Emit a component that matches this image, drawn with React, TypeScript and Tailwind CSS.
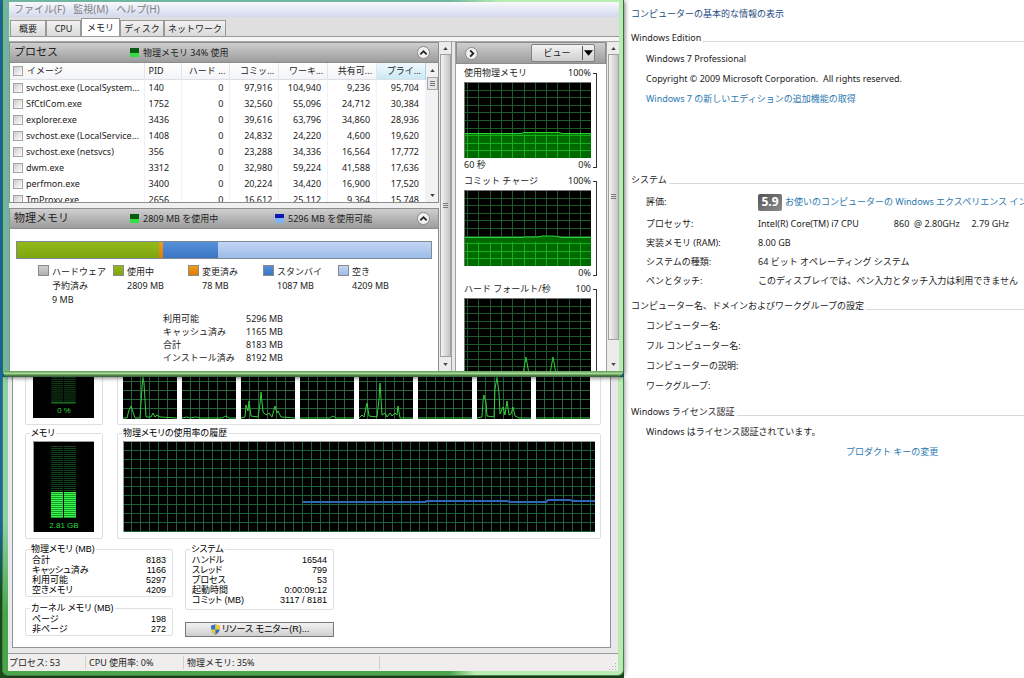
import type { ReactNode } from "react";

const processes = [
  ["svchost.exe (LocalSystem...", "140", "0", "97,916", "104,940", "9,236", "95,704"],
  ["SfCtlCom.exe", "1752", "0", "32,560", "55,096", "24,712", "30,384"],
  ["explorer.exe", "3436", "0", "39,616", "63,796", "34,860", "28,936"],
  ["svchost.exe (LocalService...", "1408", "0", "24,832", "24,220", "4,600", "19,620"],
  ["svchost.exe (netsvcs)", "356", "0", "23,288", "34,336", "16,564", "17,772"],
  ["dwm.exe", "3312", "0", "32,980", "59,224", "41,588", "17,636"],
  ["perfmon.exe", "3400", "0", "20,224", "34,420", "16,900", "17,520"],
  ["TmProxy.exe", "2656", "0", "16,612", "25,112", "9,364", "15,748"],
];

const numberColumns = ["ハード ...", "コミッ...", "ワーキ...", "共有可...", "プライ..."];

const tabs = [
  { name: "概要", width: "w-9" },
  { name: "CPU", width: "w-[35px]" },
  { name: "メモリ", width: "w-[39px]" },
  { name: "ディスク", width: "w-[44px]" },
  { name: "ネットワーク", width: "w-[62px]" },
];

const memoryParts = [
  { label: "ハードウェア", more: "予約済み", mb: 9, color: "from-[#d0d0d0] to-[#b0b0b0]" },
  { label: "使用中", mb: 2809, color: "from-[#93b81a] to-[#7ea60c]" },
  { label: "変更済み", mb: 78, color: "from-[#f39a1c] to-[#dc7c04]" },
  { label: "スタンバイ", mb: 1087, color: "from-[#5590da] to-[#3b75c4]" },
  { label: "空き", mb: 4209, color: "from-[#c2d6f5] to-[#9dbce8]" },
];

const cpuLines = [
  "0,41 4,41 6,33 8,29 10,35 12,41 17,41 19,10 20,0 21,6 23,40 28,40 30,36 32,40 34,38 37,40 54,41",
  "0,41 5,40 8,41 14,40 18,41 40,41 44,39 47,41 54,41",
  "0,41 4,40 5,28 7,34 8,24 10,39 17,40 19,27 20,15 22,35 25,38 28,36 31,40 34,29 36,36 37,34 40,40 54,41",
  "0,41 30,41 33,39 36,41 54,41",
  "0,41 3,38 5,40 8,26 10,39 18,40 20,22 21,6 23,38 26,36 28,40 31,36 33,39 36,36 38,38 39,29 41,41 54,41",
  "0,41 54,41",
  "0,41 5,40 6,24 7,18 9,25 10,39 17,40 18,12 20,0 22,16 23,37 26,30 28,38 30,24 32,38 34,37 36,30 38,39 42,41 54,41",
  "0,41 54,41",
];

function PanelHeader({ title, children }: { title: string; children?: ReactNode }) {
  return (
    <div className="flex h-[21px] shrink-0 items-center border border-[#8d8d8d] bg-linear-to-b from-[#cfcfcf] to-[#9c9c9c] px-1">
      <h2 className="w-[116px] text-[11px]">{title}</h2>
      {children}
      <button type="button" aria-label={`${title} を折りたたむ`} className="mr-1 ml-auto flex size-[13px] items-center justify-center rounded-full border border-[#8a8a8a] bg-[#f1f1f1]">
        <svg viewBox="0 0 10 10" className="size-[9px]" fill="none" stroke="#222" strokeWidth="2">
          <path d="M1.5 7 5 3.5 8.5 7" />
        </svg>
      </button>
    </div>
  );
}

function Indicator({ blue, children }: { blue?: boolean; children: ReactNode }) {
  return (
    <div className="flex items-center gap-1">
      <span className={`size-[9px] bg-linear-to-b ${blue ? "from-[#0a18b0] from-40% to-[#7cb4f4] to-40%" : "from-[#0a5a10] from-60% to-[#30e040] to-60%"}`} />
      {children}
    </div>
  );
}

function Arrow({ down }: { down?: boolean }) {
  return (
    <svg viewBox="0 0 6 4" className="h-[3px] w-[5px]" fill="#444">
      <path d={down ? "M0 0h6L3 4z" : "M0 4h6L3 0z"} />
    </svg>
  );
}

function ScrollBar({ thumb }: { thumb: string }) {
  return (
    <div className="flex w-3 shrink-0 flex-col items-center bg-[#ececec]">
      <button type="button" aria-label="上へスクロール" className="flex h-3 w-full items-center justify-center"><Arrow /></button>
      <div className={`${thumb} flex w-[11px] items-center justify-center border border-[#a0a0a0] bg-linear-to-r from-[#f4f4f4] to-[#c4c4c4]`}>
        <Grip />
      </div>
      <button type="button" aria-label="下へスクロール" className="mt-auto flex h-[13px] w-full items-center justify-center"><Arrow down /></button>
    </div>
  );
}

function Grip() {
  return (
    <svg viewBox="0 0 5 6" className="h-[6px] w-[5px]" stroke="#777">
      <path d="M0 .5h5M0 2.5h5M0 4.5h5" />
    </svg>
  );
}

function ProcessList() {
  return (
    <div className="flex h-[140px] shrink-0 border-x border-b border-[#8d8d8d] bg-white">
      <div className="min-w-0 flex-1 overflow-hidden">
        <table className="w-full table-fixed border-collapse leading-4 whitespace-nowrap">
          <colgroup>
            <col className="w-[134px]" />
            <col className="w-[37px]" />
            <col /><col /><col /><col /><col />
          </colgroup>
          <thead>
            <tr className="h-4 border-b border-[#dcdfe4] bg-linear-to-b from-white to-[#f3f4f6]">
              <th className="border-r border-[#e2e6ec] p-0 text-left font-normal">
                <label className="flex items-center gap-1 pl-[3px]">
                  <CheckBox />
                  イメージ
                </label>
              </th>
              <th className="border-r border-[#e2e6ec] p-0 pl-1 text-left font-normal">PID</th>
              {numberColumns.map((name, i) => (
                <th key={name} className={`border-r p-0 pr-1 text-right font-normal ${i === 4 ? "border-[#a8d4e8] bg-linear-to-b from-[#eff9fd] to-[#cbe9f6]" : "border-[#e2e6ec]"}`}>
                  {name}
                </th>
              ))}
            </tr>
          </thead>
          <tbody>
            {processes.map(([name, pid, ...numbers]) => (
              <tr key={pid} className="h-4">
                <td className="border-r border-[#f0f2f5] p-0">
                  <label className="flex items-center gap-[3px] pl-[3px]">
                    <CheckBox />
                    {name}
                  </label>
                </td>
                <td className="border-r border-[#f0f2f5] p-0 pl-1">{pid}</td>
                {numbers.map((n, i) => (
                  <td key={i} className="border-r border-[#f0f2f5] p-0 pr-[6px] text-right">{n}</td>
                ))}
              </tr>
            ))}
          </tbody>
        </table>
      </div>
      <div className="flex w-3 flex-col items-center bg-[#f2f2f2]">
        <button type="button" aria-label="上へ" className="flex h-[14px] items-center"><Arrow /></button>
        <div className="flex h-[13px] w-[11px] items-center justify-center border border-[#a8a8a8] bg-[#e4e4e4]"><Grip /></div>
        <button type="button" aria-label="下へ" className="mt-auto flex h-[13px] items-center"><Arrow down /></button>
      </div>
    </div>
  );
}

function CheckBox() {
  return <input type="checkbox" className="size-[10px] shrink-0 appearance-none border border-[#a2a3a3] bg-linear-to-br from-[#cdcdcd] to-white" />;
}

function PhysicalMemory() {
  return (
    <div className="min-h-0 flex-1 border-x border-[#8d8d8d] bg-white pt-3">
      <div className="mx-[6px] flex h-[18px] border border-[#7d8a94]">
        {memoryParts.map((part) => (
          <div key={part.label} className={`basis-0 bg-linear-to-b ${part.color}`} style={{ flexGrow: part.mb }} />
        ))}
      </div>
      <ul className="mt-[6px] ml-7 flex leading-[14px]">
        {memoryParts.map((part) => (
          <li key={part.label} className="flex w-[75px] shrink-0 gap-[3px]">
            <span className={`size-[11px] shrink-0 border border-[#8a8a8a] bg-linear-to-b ${part.color}`} />
            <span className="whitespace-nowrap">
              {part.label}
              {part.more && <span className="block">{part.more}</span>}
              <span className="block">{part.mb} MB</span>
            </span>
          </li>
        ))}
      </ul>
      <dl className="mt-[5px] ml-[153px] grid grid-cols-[83px_auto] justify-start leading-[13px]">
        <dt>利用可能</dt><dd>5296 MB</dd>
        <dt>キャッシュ済み</dt><dd>1165 MB</dd>
        <dt>合計</dt><dd>8183 MB</dd>
        <dt>インストール済み</dt><dd>8192 MB</dd>
      </dl>
    </div>
  );
}

function ResourceGraph({ title, max, min, start, line, fill }: { title: string; max: string; min?: string; start?: string; line: string; fill?: boolean }) {
  const columns = Array.from({ length: 11 }, (_, i) => Math.round(i * 11.3) + 3.5);
  return (
    <div className="flex gap-[2px] pl-2">
      <div className="w-[127px]">
        <div className="flex h-[18px] items-center justify-between"><span>{title}</span><span>{max}</span></div>
        <svg viewBox="0 0 127 76" className="block h-[76px] w-full bg-black" fill="none">
          <g stroke="#1d5a2a">
            {columns.map((x) => <path key={x} d={`M${x} 0V76`} />)}
            {Array.from({ length: 10 }, (_, i) => <path key={i} d={`M0 ${Math.round(i * 7.6) + 0.5}H127`} />)}
          </g>
          {fill && (
            <>
              <path d={`${line}V76H0z`} fill="#006a00" />
              <g stroke="#14b01c">
                {columns.map((x) => <path key={x} d={`M${x} 52V76`} />)}
                <path d="M0 53.5H127M0 61.5H127M0 68.5H127" />
              </g>
            </>
          )}
          <path d={line} stroke="#2bd335" />
          <path d="M.5 76V.5H127" stroke="#777" />
        </svg>
        {min && <div className="flex h-[14px] items-center justify-between"><span>{start}</span><span>{min}</span></div>}
      </div>
      <div className={`mt-[9px] w-1 border-t border-r border-[#333] ${min ? "mb-1 border-b" : ""}`} />
    </div>
  );
}

function ResourceMonitor() {
  return (
    <section className="relative z-10 ml-[2px] flex h-[377px] flex-col overflow-hidden rounded-b-md border border-t-0 border-[#3f6a48] bg-linear-to-r from-[#6fb5a0] from-72% to-[#b8ecb0] to-80% pt-[2px] shadow-[1px_1px_4px_#0008]">
      <div className="mr-[4px] ml-[6px] flex min-h-0 flex-1 flex-col bg-[#f0f0f0]">
        <nav className="flex h-[15px] items-center gap-2 bg-linear-to-b from-[#f8f9fc] to-[#d3d9ee] pl-[5px] text-[10px] text-[#808080]">
          <button type="button">ファイル(F)</button>
          <button type="button">監視(M)</button>
          <button type="button">ヘルプ(H)</button>
        </nav>
        <div role="tablist" className="flex h-5 items-end border-b border-[#999] bg-[#dfdfdf] pl-px">
          {tabs.map(({ name, width }) => (
            <button
              key={name}
              type="button"
              role="tab"
              aria-selected={name === "メモリ"}
              className={`${width} border border-b-0 border-[#999] text-center whitespace-nowrap ${name === "メモリ" ? "h-[18px] bg-white" : "h-4 bg-linear-to-b from-[#f2f2f2] to-[#dadada]"}`}
            >
              {name}
            </button>
          ))}
        </div>
        <div className="h-[5px] border-b border-[#aaa] bg-[#f6f6f6]" />
        <div className="flex min-h-0 flex-1">
          <div className="flex min-w-0 flex-1 flex-col">
            <PanelHeader title="プロセス">
              <Indicator>物理メモリ 34% 使用</Indicator>
            </PanelHeader>
            <ProcessList />
            <div className="h-[5px] shrink-0" />
            <PanelHeader title="物理メモリ">
              <div className="w-[145px]"><Indicator>2809 MB を使用中</Indicator></div>
              <Indicator blue>5296 MB を使用可能</Indicator>
            </PanelHeader>
            <PhysicalMemory />
          </div>
          <ScrollBar thumb="h-[303px]" />
          <div className="w-[5px] shrink-0 border-x border-[#a0a0a0] bg-[#e8e8e8]" />
          <div className="w-[151px] shrink-0 overflow-hidden border-r border-[#a0a0a0] bg-white">
            <div className="flex h-[22px] items-center justify-between border border-[#8d8d8d] bg-linear-to-b from-[#cfcfcf] to-[#9c9c9c] pr-[10px] pl-2">
              <button type="button" aria-label="グラフを隠す" className="flex size-[13px] items-center justify-center rounded-full border border-[#8a8a8a] bg-[#f1f1f1]">
                <svg viewBox="0 0 10 10" className="size-[9px]" fill="none" stroke="#222" strokeWidth="2"><path d="M3.5 1.5 7 5 3.5 8.5" /></svg>
              </button>
              <button type="button" className="flex h-[18px] w-16 items-center rounded-xs border border-[#808080] bg-linear-to-b from-[#f4f4f4] to-[#cfcfcf]">
                <span className="flex-1 text-center">ビュー</span>
                <span className="flex h-[14px] items-center border-l border-[#555] px-px">
                  <svg viewBox="0 0 8 5" className="h-[6px] w-[9px]"><path d="M0 0h8L4 5z" /></svg>
                </span>
              </button>
            </div>
            <ResourceGraph title="使用物理メモリ" max="100%" start="60 秒" min="0%" fill line="M0 51.5H57L60 50.5H95L98 51.5H127" />
            <ResourceGraph title="コミット チャージ" max="100%" min="0%" fill line="M0 47.5H58L62 47H74L78 46H90L98 47.5H127" />
            <ResourceGraph title="ハード フォールト/秒" max="100" line="M59 76 62 59 65 76M86 76 89 59 92 76M95 73 98 76" />
          </div>
          <ScrollBar thumb="h-[286px]" />
        </div>
      </div>
      <div className="h-[5px] shrink-0 bg-linear-to-b from-[#5c9a52] via-[#a4d896] to-[#356b2a]" />
    </section>
  );
}

function Meter({ value, level }: { value: string; level: number }) {
  const bars = Array.from({ length: 36 }, (_, i) => i * 2 + 5.5);
  return (
    <svg viewBox="0 0 61 91" className="block h-[91px] w-[61px] bg-black">
      {bars.map((y) => (
        <path key={y} d={`M18 ${y}h12m1 0h12`} stroke="#12451c" />
      ))}
      <path d={`M18 ${77 - level}h12v${level}h-12zM31 ${77 - level}h12v${level}h-12z`} fill="#14a024" />
      {bars.filter((y) => y > 76 - level).map((y) => (
        <path key={y} d={`M18 ${y}h12m1 0h12`} stroke="#3cf450" />
      ))}
      <text x="31" y="87" textAnchor="middle" fill="#2fd840" fontSize="8">{value}</text>
      <path d="M.5 91V.5H61" stroke="#999" fill="none" />
    </svg>
  );
}

function Group({ title, className, children }: { title: string; className?: string; children: ReactNode }) {
  return (
    <fieldset className={`min-w-0 rounded-xs border border-[#dce0e2] ${className ?? ""}`}>
      <legend className="ml-1 px-px leading-[10px]">{title}</legend>
      {children}
    </fieldset>
  );
}

function Stats({ rows }: { rows: string[][] }) {
  return (
    <dl className="pt-px pr-[6px] pl-[6px] leading-[10px]">
      {rows.map(([name, value]) => (
        <div key={name} className="flex justify-between"><dt>{name}</dt><dd>{value}</dd></div>
      ))}
    </dl>
  );
}

function TaskManager() {
  return (
    <section className="ml-[2px] h-[299px] overflow-hidden rounded-b-md border border-t-0 border-[#4c7a56] bg-linear-to-r from-[#48a648] from-72% to-[#b8ecb0] to-76% pr-[5px] pb-1 shadow-[1px_1px_4px_#0006]">
      <div className="h-full bg-linear-to-b from-[#8ccfa8] from-50% to-[#48a648] to-80% pl-[5px]">
        <div className="flex h-full flex-col bg-[#e9e9ec] text-black">
          <div className="mr-[7px] mb-[5px] ml-1 flex-1 overflow-hidden border border-t-0 border-[#8f9499] bg-white pr-[9px] pl-3 font-['Liberation_Sans','Noto_Sans_CJK_JP',sans-serif] [font-feature-settings:'palt']">
            <div className="flex gap-[14px]">
              <div className="flex h-12 w-[78px] shrink-0 flex-col justify-end rounded-b-xs border border-t-0 border-[#dce0e2] pb-[6px] pl-[7px]">
                <svg viewBox="0 0 61 42" className="block h-[42px] w-[61px] bg-black">
                  {Array.from({ length: 13 }, (_, i) => <path key={i} d={`M18 ${i * 2 + 0.5}h12m1 0h12`} stroke="#12451c" />)}
                  <path d="M18 26.5h25" stroke="#26b034" />
                  <text x="31" y="37" textAnchor="middle" fill="#2fd840" fontSize="8">0 %</text>
                </svg>
              </div>
              <div className="flex h-12 min-w-0 flex-1 gap-[5px] rounded-b-xs border border-t-0 border-[#dce0e2] pr-[10px] pl-[5px]">
                {cpuLines.map((points, n) => (
                  <svg key={n} className="block h-[42px] w-0 min-w-0 flex-1 bg-black" fill="none">
                    <path d="M8.5 0V42M17.5 0V42M26.5 0V42M35.5 0V42M44.5 0V42M0 4.5H60M0 13.5H60M0 22.5H60M0 31.5H60" stroke="#28643e" />
                    <polyline points={points} stroke="#35d03e" />
                  </svg>
                ))}
              </div>
            </div>
            <div className="mt-[3px] flex gap-[14px] text-[9px]">
              <Group title="メモリ" className="w-[78px] shrink-0">
                <div className="pt-[3px] pb-[6px] pl-[7px]">
                  <Meter value="2.81 GB" level={26} />
                </div>
              </Group>
              <Group title="物理メモリの使用率の履歴" className="flex-1">
                <div className="px-[5px] pt-[3px] pb-[6px]">
                  <svg viewBox="0 0 472 91" preserveAspectRatio="none" className="block h-[91px] w-full bg-black" fill="none">
                    {Array.from({ length: 52 }, (_, i) => <path key={`v${i}`} d={`M${i * 9 + 8.5} 0V91`} stroke="#1e6038" />)}
                    {Array.from({ length: 10 }, (_, i) => <path key={`h${i}`} d={`M0 ${i * 9 + 9.5}H472`} stroke="#1e6038" />)}
                    <path d="M180 61H302L304 60H384L387 61H423L425 59H447L450 60H472" stroke="#2f66b8" strokeWidth="2" />
                    <path d="M.5 91V.5H472" stroke="#999" />
                  </svg>
                </div>
              </Group>
            </div>
            <div className="mt-[5px] flex gap-3 text-[9px]">
              <div className="w-[148px]">
                <Group title="物理メモリ (MB)" className="pb-px">
                  <Stats rows={[["合計", "8183"], ["キャッシュ済み", "1166"], ["利用可能", "5297"], ["空きメモリ", "4209"]]} />
                </Group>
                <Group title="カーネル メモリ (MB)" className="mt-[6px] pb-px">
                  <Stats rows={[["ページ", "198"], ["非ページ", "272"]]} />
                </Group>
              </div>
              <div className="w-[149px]">
                <Group title="システム" className="pb-1">
                  <Stats rows={[["ハンドル", "16544"], ["スレッド", "799"], ["プロセス", "53"], ["起動時間", "0:00:09:12"], ["コミット (MB)", "3117 / 8181"]]} />
                </Group>
                <button type="button" className="mt-3 flex h-[15px] w-full items-center justify-center gap-px border border-[#777] bg-linear-to-b from-[#f2f2f2] to-[#cfcfcf]">
                  <svg viewBox="0 0 12 12" className="size-[11px]">
                    <path d="M6 0Q3.500 1.500 1 1.500 1 9 6 12z" fill="#2f74c8" />
                    <path d="M6 0Q8.500 1.500 11 1.500 11 9 6 12z" fill="#f0c830" />
                    <path d="M1.200 6H6v6Q2 9.500 1.200 6z" fill="#f0c830" />
                    <path d="M10.800 6H6v6Q10 9.500 10.800 6z" fill="#2f74c8" />
                  </svg>
                  リソース モニター(R)...
                </button>
              </div>
            </div>
          </div>
          <footer className="flex h-[18px] shrink-0 items-center border-t border-[#9a9a9a] bg-[#f0eded] text-[#222]">
            <span className="w-[78px] border-r border-[#d0d0d0] pl-px">プロセス: 53</span>
            <span className="w-[98px] border-r border-[#d0d0d0] pl-[3px]">CPU 使用率: 0%</span>
            <span className="w-[196px] border-r border-[#d0d0d0] pl-[3px]">物理メモリ: 35%</span>
            <svg viewBox="0 0 8 8" className="mt-auto mr-px ml-auto size-2" fill="#b0b0b0">
              <path d="M6 0h1v1H6zM3 3h1v1H3zM6 3h1v1H6zM0 6h1v1H0zM3 6h1v1H3zM6 6h1v1H6z" />
            </svg>
          </footer>
        </div>
      </div>
    </section>
  );
}

function SectionTitle({ children }: { children: ReactNode }) {
  return (
    <div className="flex h-5 items-center gap-[2px]">
      <h2>{children}</h2>
      <span className="mt-[6px] h-px flex-1 bg-[#d5d8dc]" />
    </div>
  );
}

function SystemRow({ name, children }: { name: string; children: ReactNode }) {
  return (
    <div className="flex h-[19px] items-center">
      <dt className="w-28 shrink-0">{name}</dt>
      <dd className="whitespace-pre">{children}</dd>
    </div>
  );
}

function SystemInfo() {
  return (
    <main className="min-w-0 flex-1 overflow-hidden bg-white pt-1 pl-[7px] whitespace-nowrap">
      <h1 className="flex h-5 items-center text-[#1c4a80]">コンピューターの基本的な情報の表示</h1>
      <div className="mt-1"><SectionTitle>Windows Edition</SectionTitle></div>
      <div className="mt-px pl-[15px] leading-5">
        <p>Windows 7 Professional</p>
        <p className="whitespace-pre">Copyright © 2009 Microsoft Corporation.  All rights reserved.</p>
        <a href="#edition" className="block text-[#2a78b0]">Windows 7 の新しいエディションの追加機能の取得</a>
      </div>
      <div className="mt-[61px]"><SectionTitle>システム</SectionTitle></div>
      <dl className="pl-[15px]">
        <div className="flex h-6 items-center">
          <dt className="w-28 shrink-0">評価:</dt>
          <dd className="flex items-center gap-[3px]">
            <span className="flex h-[17px] w-6 items-center justify-center rounded-xs bg-linear-to-br from-[#555] to-[#8d8d8d] text-[12px] font-bold text-white">5.9</span>
            <a href="#score" className="text-[#2a78b0]">お使いのコンピューターの Windows エクスペリエンス インデックス</a>
          </dd>
        </div>
        <SystemRow name="プロセッサ:">{"Intel(R) Core(TM) i7 CPU               860  @ 2.80GHz     2.79 GHz"}</SystemRow>
        <SystemRow name="実装メモリ (RAM):">8.00 GB</SystemRow>
        <SystemRow name="システムの種類:">64 ビット オペレーティング システム</SystemRow>
        <SystemRow name="ペンとタッチ:">このディスプレイでは、ペン入力とタッチ入力は利用できません</SystemRow>
      </dl>
      <div className="mt-[6px]"><SectionTitle>コンピューター名、ドメインおよびワークグループの設定</SectionTitle></div>
      <div className="pl-[15px] leading-5">
        <p>コンピューター名:</p>
        <p>フル コンピューター名:</p>
        <p>コンピューターの説明:</p>
        <p>ワークグループ:</p>
      </div>
      <div className="mt-[6px]"><SectionTitle>Windows ライセンス認証</SectionTitle></div>
      <p className="pl-[15px] leading-5">Windows はライセンス認証されています。</p>
      <a href="#key" className="ml-[215px] leading-5 text-[#2a78b0]">プロダクト キーの変更</a>
    </main>
  );
}

export default function App() {
  return (
    <div className="flex min-h-screen bg-linear-to-b from-[#176fa6] from-78% to-[#1b5018] to-88% font-['Noto_Sans','Noto_Sans_CJK_JP',sans-serif] text-[9px] text-[#222]" lang="ja">
      <div className="z-10 w-[624px] shrink-0">
        <ResourceMonitor />
        <TaskManager />
      </div>
      <SystemInfo />
    </div>
  );
}
